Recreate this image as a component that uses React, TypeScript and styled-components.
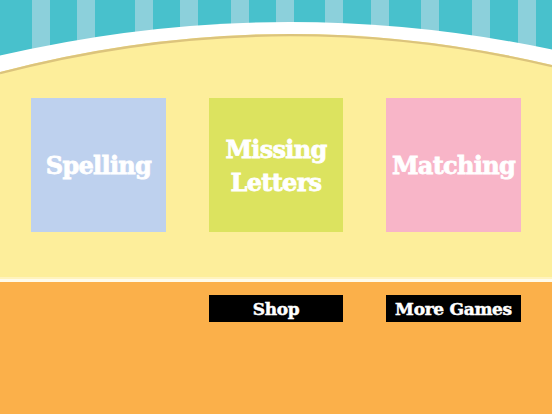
import React from "react";
import styled, { createGlobalStyle } from "styled-components";

const GlobalStyle = createGlobalStyle`
  html, body {
    margin: 0;
    padding: 0;
    width: 552px;
    height: 414px;
    overflow: hidden;
    background: #fbb04a;
  }
  * { box-sizing: border-box; }
`;

const Screen = styled.div`
  width: 552px;
  height: 414px;
  display: flex;
  flex-direction: column;
  font-family: "DejaVu Serif", "Liberation Serif", serif;
`;

const Board = styled.section`
  position: relative;
  height: 277px;
  background: #fdee9b;
  padding-top: 98px;
`;

const HeaderArt = styled.svg`
  position: absolute;
  top: 0;
  left: 0;
  display: block;
`;

const Columns = styled.div`
  position: relative;
  display: grid;
  grid-template-columns: 135px 134px 135px;
  column-gap: 43px;
  padding: 0 31px;
`;

const Card = styled.div<{ $bg: string }>`
  height: 134px;
  background: ${(p) => p.$bg};
  display: flex;
  align-items: center;
  justify-content: center;
  text-align: center;
  color: #ffffff;
  font-weight: 700;
  font-size: 24px;
  line-height: 33px;
  letter-spacing: -0.7px;
  -webkit-text-stroke: 0.8px #ffffff;
  padding-top: 1px;
`;

const Divider = styled.div`
  height: 5px;
  background: linear-gradient(#fff3bd 0, #fff3bd 2px, #fffbea 2px, #fffbea 5px);
`;

const Floor = styled.section`
  flex: 1;
  background: #fbb04a;
  padding-top: 13px;
`;

const ButtonRow = styled(Columns)``;

const GameButton = styled.button<{ $col: number }>`
  grid-column: ${(p) => p.$col};
  height: 27px;
  margin: 0;
  border: none;
  background: #000000;
  color: #ffffff;
  font-family: "DejaVu Serif", "Liberation Serif", serif;
  font-weight: 700;
  font-size: 17px;
  letter-spacing: -0.3px;
  -webkit-text-stroke: 0.5px #ffffff;
  padding: 0;
  cursor: pointer;
`;

const stripes = [32, 77, 135, 180, 231, 276, 325, 371, 421, 472, 518];

const Header = () => (
  <HeaderArt width="552" height="80" viewBox="0 0 552 80">
    <rect x="0" y="0" width="552" height="80" fill="#48c1cc" />
    {stripes.map((x) => (
      <rect key={x} x={x} y="0" width="18" height="80" fill="#8cd0db" />
    ))}
    <path d="M0,55.6 Q276,-8.4 552,49.5 L552,80 L0,80 Z" fill="#ffffff" />
    <path d="M0,72 Q276,-0.4 552,65 L552,80 L0,80 Z" fill="#fdee9b" />
    <path
      d="M0,73.2 Q276,0.8 552,66.2"
      fill="none"
      stroke="#dcc47c"
      strokeWidth="2.4"
    />
  </HeaderArt>
);

export default function App() {
  return (
    <>
      <GlobalStyle />
      <Screen>
        <Board>
          <Header />
          <Columns>
            <Card $bg="#bed1ee">Spelling</Card>
            <Card $bg="#dce35f">
              Missing
              <br />
              Letters
            </Card>
            <Card $bg="#f8b5c8">Matching</Card>
          </Columns>
        </Board>
        <Divider />
        <Floor>
          <ButtonRow>
            <GameButton $col={2}>Shop</GameButton>
            <GameButton $col={3}>More Games</GameButton>
          </ButtonRow>
        </Floor>
      </Screen>
    </>
  );
}
